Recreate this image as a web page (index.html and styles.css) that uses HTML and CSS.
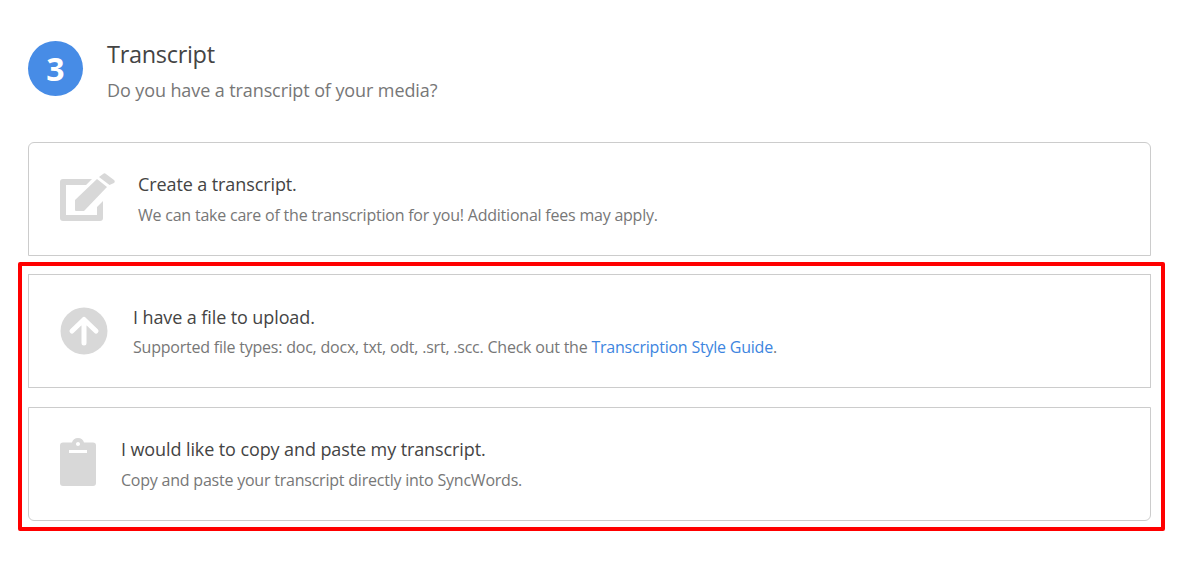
FILE: index.html
```html
<!DOCTYPE html>
<html lang="en">
<head>
<meta charset="utf-8">
<title>Transcript</title>
<link rel="stylesheet" href="styles.css">
</head>
<body>
<main class="step">
  <header class="step-head">
    <div class="step-num">3</div>
    <div class="step-text">
      <h1 class="step-title">Transcript</h1>
      <p class="step-sub">Do you have a transcript of your media?</p>
    </div>
  </header>

  <section class="card card-first">
    <svg class="icon icon-raised" width="55" height="48" viewBox="0 0 55 48" aria-hidden="true">
      <path fill="#d8d8d8" d="M3 6H32L26 12H6V42H37V34L43 28V45C43 47 42 48 40 48H3C1 48 0 47 0 45V9C0 7 1 6 3 6Z"/>
      <path fill="#d8d8d8" d="M15 27L37 6L47 14L24 38H16C15 38 15 37 15 37Z"/>
      <path fill="#d8d8d8" d="M39 4L43 1C44 0 45 0 46 1L54 7C55 8 55 9 54 10L49.500 12Z"/>
    </svg>
    <div class="card-body body-first">
      <h2 class="card-title">Create a transcript.</h2>
      <p class="card-desc">We can take care of the transcription for you! Additional fees may apply.</p>
    </div>
  </section>

  <div class="highlight">
    <section class="card card-square">
      <svg class="icon" width="48" height="48" viewBox="0 0 48 48" aria-hidden="true">
        <circle cx="24" cy="24" r="23.500" fill="#d8d8d8"/>
        <path fill="none" stroke="#fff" stroke-width="5" stroke-linecap="round" stroke-linejoin="round" d="M24 36V12.500M12 24L24 12.500L36 24"/>
      </svg>
      <div class="card-body body-second">
        <h2 class="card-title">I have a file to upload.</h2>
        <p class="card-desc">Supported file types: doc, docx, txt, odt, .srt, .scc. Check out the <a class="link" href="#">Transcription Style Guide</a>.</p>
      </div>
    </section>

    <section class="card card-last">
      <svg class="icon icon-raised" width="36" height="48" viewBox="0 0 36 48" aria-hidden="true">
        <path fill-rule="evenodd" fill="#d8d8d8" d="M12 4.500C12.500 1.800 15 0 18 0C21 0 23.500 1.800 24 4.500H33C35 4.500 36 5.500 36 7.500V45C36 47 35 48 33 48H3C1 48 0 47 0 45V7.500C0 5.500 1 4.500 3 4.500ZM18 4C16.900 4 16 4.900 16 6C16 7.100 16.900 8 18 8C19.100 8 20 7.100 20 6C20 4.900 19.100 4 18 4ZM9 12V15H27V12Z"/>
      </svg>
      <div class="card-body body-third">
        <h2 class="card-title">I would like to copy and paste my transcript.</h2>
        <p class="card-desc">Copy and paste your transcript directly into SyncWords.</p>
      </div>
    </section>
  </div>
</main>
</body>
</html>
```
FILE: styles.css
```css
* { box-sizing: border-box; }
html, body { margin: 0; padding: 0; background: #fff; }
body { font-family: "Open Sans", "Noto Sans", sans-serif; color: #444; }

.step { padding: 41px 30px 0 28px; }

.step-head { display: flex; height: 101px; }
.step-num {
  width: 55px; height: 55px; border-radius: 50%;
  background: #478ce6; color: #fff;
  font-size: 32px; font-weight: 700; line-height: 55px; text-align: center;
}
.step-text { margin-left: 24px; }
.step-title { margin: 0; font-size: 23.500px; font-weight: 400; line-height: 26px; color: #444; letter-spacing: -0.3px; }
.step-sub { margin: 10px 0 0; font-size: 18px; line-height: 26px; color: #777; letter-spacing: -0.1px; }

.card {
  display: flex; align-items: center;
  height: 114px; padding-left: 31px;
  border: 1px solid #ccc; background: #fff;
}
.card-first { border-radius: 6px 6px 0 0; }
.card-last { border-radius: 0 0 6px 6px; margin-top: 19px; }

.icon { flex: none; display: block; }
.icon-raised { margin-bottom: 4px; }
.card-body { padding-top: 1px; }
.body-first { margin-left: 23px; }
.body-second { margin-left: 25px; padding-top: 3px; padding-bottom: 1px; }
.body-third { margin-left: 25px; }

.card-title { margin: 0; font-size: 18px; font-weight: 400; line-height: 24px; color: #444; letter-spacing: -0.1px; }
.card-desc { margin: 7px 0 0; font-size: 16px; line-height: 24px; color: #777; letter-spacing: -0.22px; }
.body-second .card-desc { margin-top: 6px; }
.link { color: #3d85e0; text-decoration: none; }

.highlight {
  margin: 6px -14px 0 -10px;
  padding: 8px 10px 6px 6px;
  border: 4px solid #f00;
  border-radius: 2px;
}
```
